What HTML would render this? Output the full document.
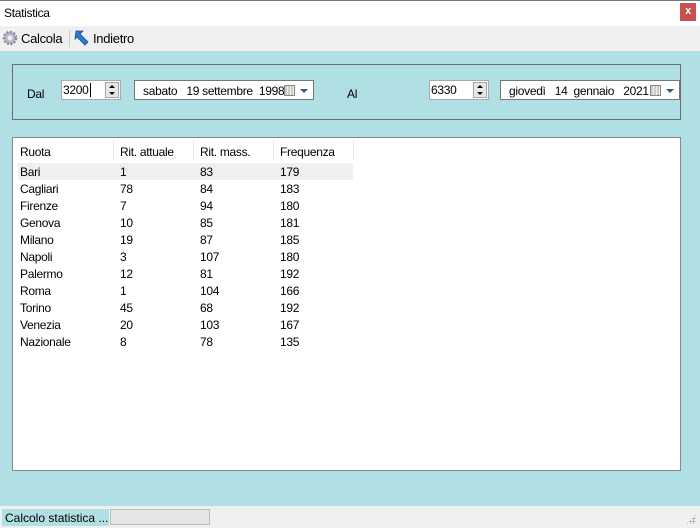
<!DOCTYPE html>
<html><head><style>
*{margin:0;padding:0;box-sizing:border-box}
body{width:700px;height:528px;background:#b0dfe4;font-family:"Liberation Sans",sans-serif;font-size:12px;color:#000;position:relative;overflow:hidden;letter-spacing:-0.3px}
.a{position:absolute}
.spin{position:absolute;background:#fff;border:1px solid #aaa;height:20px}
.spin span{position:absolute;left:1px;top:2px}
.btns{position:absolute;right:1px;top:1px;width:14px;height:16px;background:#e6e6e6;border:1px solid #aaa}
.btns:before{content:"";position:absolute;left:3px;top:2px;border:3px solid transparent;border-bottom:3px solid #000;border-top:0}
.btns:after{content:"";position:absolute;left:3px;bottom:2px;border:3px solid transparent;border-top:3px solid #000;border-bottom:0}
.date{position:absolute;background:#fff;border:1px solid #777;height:20px}
.date span{position:absolute;left:8px;top:3px;white-space:pre}
.cal{position:absolute;right:18px;top:4px;width:11px;height:11px;border:1px solid #888;background:repeating-linear-gradient(90deg,#ccc 0 2px,#eee 2px 3px)}
.dd{position:absolute;right:5px;top:8px;border:4px solid transparent;border-top:4px solid #3a5a8a;border-bottom:0}
.row{position:absolute;left:18px;width:335px;height:17px}
.row span{position:absolute;top:2px}
</style></head><body>
<div class="a" style="left:0;top:0;width:700px;height:26px;background:#fff;border-top:1px solid #777"></div>
<div class="a" style="left:4px;top:6px">Statistica</div>
<div class="a" style="left:680px;top:3px;width:16px;height:18px;background:#c75050;color:#fff;font-size:11px;font-weight:bold;text-align:center;line-height:17px">x</div>
<div class="a" style="left:0;top:26px;width:700px;height:25px;background:#f0f0f0"></div>
<svg class="a" style="left:2px;top:30px" width="16" height="16" viewBox="0 0 16 16"><circle cx="8" cy="8" r="6" fill="#b8b8c8" stroke="#8888a0" stroke-dasharray="2 1.5" stroke-width="2.5"/><circle cx="8" cy="8" r="2.5" fill="#eee"/></svg>
<div class="a" style="left:21px;top:31px;font-size:13px">Calcola</div>
<div class="a" style="left:69px;top:30px;width:1px;height:17px;background:#ccc"></div>
<svg class="a" style="left:74px;top:29px" width="16" height="18" viewBox="0 0 16 18"><path d="M2 2 L9 2 L6 5 L14 13 L11 16 L3 8 L1 10 Z" fill="#2a7ad0" stroke="#1a4a90" stroke-width="0.8"/></svg>
<div class="a" style="left:93px;top:31px;font-size:13px">Indietro</div>

<div class="a" style="left:12px;top:64px;width:669px;height:56px;border:1px solid #6d6d6d"></div>
<div class="a" style="left:27px;top:87px">Dal</div>
<div class="spin" style="left:61px;top:80px;width:60px"><span>3200<span style="position:static;border-left:1px solid #000;margin-left:1px"></span></span><div class="btns"></div></div>
<div class="date" style="left:134px;top:80px;width:180px"><span>sabato   19 settembre  1998</span><div class="cal"></div><div class="dd"></div></div>
<div class="a" style="left:347px;top:87px">Al</div>
<div class="spin" style="left:429px;top:80px;width:60px"><span>6330</span><div class="btns"></div></div>
<div class="date" style="left:500px;top:80px;width:180px"><span>giovedì   14  gennaio   2021</span><div class="cal"></div><div class="dd"></div></div>

<div class="a" style="left:12px;top:137px;width:669px;height:334px;background:#fff;border:1px solid #888"></div>
<div class="row" style="top:143px"><span style="left:2px">Ruota</span><span style="left:102px">Rit. attuale</span><span style="left:182px">Rit. mass.</span><span style="left:262px">Frequenza</span></div>
<div class="a" style="left:113px;top:140px;width:1px;height:20px;background:#e5e5e5"></div>
<div class="a" style="left:193px;top:140px;width:1px;height:20px;background:#e5e5e5"></div>
<div class="a" style="left:273px;top:140px;width:1px;height:20px;background:#e5e5e5"></div>
<div class="a" style="left:353px;top:140px;width:1px;height:20px;background:#e5e5e5"></div>
<div class="row" style="top:163px;background:#efefef"><span style="left:2px">Bari</span><span style="left:102px">1</span><span style="left:182px">83</span><span style="left:262px">179</span></div>
<div class="row" style="top:180px"><span style="left:2px">Cagliari</span><span style="left:102px">78</span><span style="left:182px">84</span><span style="left:262px">183</span></div>
<div class="row" style="top:197px"><span style="left:2px">Firenze</span><span style="left:102px">7</span><span style="left:182px">94</span><span style="left:262px">180</span></div>
<div class="row" style="top:214px"><span style="left:2px">Genova</span><span style="left:102px">10</span><span style="left:182px">85</span><span style="left:262px">181</span></div>
<div class="row" style="top:231px"><span style="left:2px">Milano</span><span style="left:102px">19</span><span style="left:182px">87</span><span style="left:262px">185</span></div>
<div class="row" style="top:248px"><span style="left:2px">Napoli</span><span style="left:102px">3</span><span style="left:182px">107</span><span style="left:262px">180</span></div>
<div class="row" style="top:265px"><span style="left:2px">Palermo</span><span style="left:102px">12</span><span style="left:182px">81</span><span style="left:262px">192</span></div>
<div class="row" style="top:282px"><span style="left:2px">Roma</span><span style="left:102px">1</span><span style="left:182px">104</span><span style="left:262px">166</span></div>
<div class="row" style="top:299px"><span style="left:2px">Torino</span><span style="left:102px">45</span><span style="left:182px">68</span><span style="left:262px">192</span></div>
<div class="row" style="top:316px"><span style="left:2px">Venezia</span><span style="left:102px">20</span><span style="left:182px">103</span><span style="left:262px">167</span></div>
<div class="row" style="top:333px"><span style="left:2px">Nazionale</span><span style="left:102px">8</span><span style="left:182px">78</span><span style="left:262px">135</span></div>

<div class="a" style="left:0;top:506px;width:700px;height:22px;background:#f0f0f0"></div>
<div class="a" style="left:2px;top:509px;width:107px;height:17px;background:#b0dfe4;padding:2px 0 0 3px;font-size:12px;letter-spacing:0">Calcolo statistica ...</div>
<div class="a" style="left:110px;top:509px;width:100px;height:16px;background:#e6e6e6;border:1px solid #bcbcbc"></div>
<div class="a" style="left:686px;top:514px;width:10px;height:10px;background:radial-gradient(circle,#999 0.8px,transparent 1px) 0 0/3px 3px;clip-path:polygon(100% 0,100% 100%,0 100%)"></div>
</body></html>
